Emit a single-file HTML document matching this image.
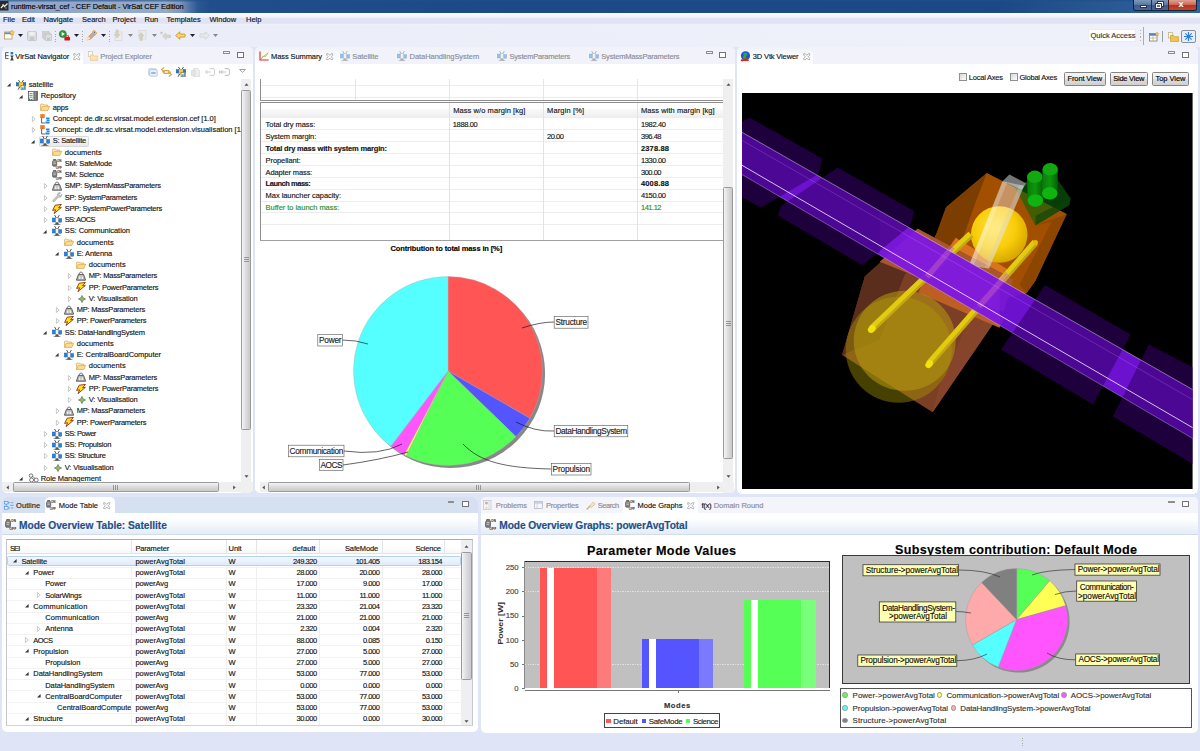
<!DOCTYPE html>
<html><head><meta charset="utf-8"><title>VirSat CEF Edition</title>
<style>
*{box-sizing:border-box;margin:0;padding:0}
html,body{width:1200px;height:751px;overflow:hidden}
body{position:relative;background:#dfe5f6;font-family:"Liberation Sans",sans-serif;font-size:7.5px;color:#141414;line-height:9px;-webkit-text-stroke:.14px currentColor}
.t{position:absolute;white-space:pre;line-height:9px}
.b{font-weight:700;font-size:7.2px}
.panel{position:absolute;background:#fff;border-radius:5px;overflow:hidden}
.tabbar{position:absolute;left:0;top:0;right:0;height:17px;background:#f2f3fa}
.tab-act{position:absolute;top:0;height:17px;background:linear-gradient(#eef2f8,#fff 80%);border-radius:5px 5px 0 0}
.dim{color:#8b8b96}
svg{position:absolute;overflow:visible}
.ic{width:10px;height:10px}
#title{position:absolute;left:0;top:0;width:1200px;height:12.500px;background:linear-gradient(rgba(31,78,138,.75) 0,rgba(31,78,138,0) 2.500px),linear-gradient(90deg,#8fa6c8 0,#95abcb 165px,#7d97bf 180px,#4c72a6 190px,#2a5893 198px,#1f4e8a 210px,#1c4a86 500px,#1b4985 1000px,#2a5a94 1120px,#33649c 1200px)}
#menubar{position:absolute;left:0;top:12.500px;width:1200px;height:12.500px;background:linear-gradient(#fbfcfe 0,#f1f3fa 35%,#dfe3f3 45%,#dfe3f3 85%,#f4f6fb 100%)}
#toolbar{position:absolute;left:0;top:25px;width:1200px;height:22px;background:linear-gradient(90deg,#eaedf8,#eff1fa)}
.vsb{position:absolute;width:10px;background:#efefef}
.vsb .th,.hsb .th{position:absolute;border:1px solid #9a9a9a;border-radius:1.500px}
.vsb .th{left:0;width:10px;background:linear-gradient(90deg,#f4f4f4,#dcdcdc 50%,#c9c9c9)}
.hsb{position:absolute;height:10px;background:#efefef}
.hsb .th{top:0;height:10px;background:linear-gradient(#f4f4f4,#dcdcdc 50%,#c9c9c9)}
.arr{position:absolute;width:0;height:0}
.mm{position:absolute;top:4px;width:6.500px;height:2.500px;border:1px solid #8c8c8c;background:#f4f4f4;border-radius:.500px}
.mx{position:absolute;top:4.500px;width:7px;height:6.500px;border:1px solid #747474;border-top-width:1.600px;background:#fff}
.g{position:absolute;background:#e9e9ee}
.num{text-align:right}
</style></head><body>
<svg width="0" height="0" style="position:absolute"><defs>
<symbol id="i-sat" viewBox="0 0 10 10"><path d="M2.600 0L4.400 3M7.400 0L5.600 3" stroke="#111" stroke-width=".7"/><rect x="3.400" y="2.800" width="3.200" height="4.600" fill="#f2f2f2" stroke="#666" stroke-width=".4"/><rect x=".3" y="3" width="2.800" height="4" fill="#1e88e5" stroke="#0d4fa0" stroke-width=".4"/><rect x="6.900" y="3.600" width="2.800" height="3.600" fill="#1e88e5" stroke="#0d4fa0" stroke-width=".4"/><path d="M2.800 9.600L4 7.600h2L7.200 9.600z" fill="#555"/><path d="M1.600 9.700h6.800" stroke="#333" stroke-width=".6"/></symbol>
<symbol id="i-proj" viewBox="0 0 10 10"><path d="M2.400 0L4.400 2.600M7.600 0L5.600 2.600" stroke="#111" stroke-width=".7"/><rect x="2.600" y="2.400" width="4.800" height="4.600" fill="#f5d020" stroke="#b8960a" stroke-width=".4"/><rect x=".2" y="2.600" width="2.400" height="3.400" fill="#1e78d8" stroke="#0d4fa0" stroke-width=".4"/><rect x="7.400" y="2.600" width="2.400" height="3.400" fill="#1e78d8" stroke="#0d4fa0" stroke-width=".4"/><path d="M2 9.800L3.600 7M8 9.800L6.400 7" stroke="#111" stroke-width=".7"/><rect x="5" y="5.400" width="4.600" height="4.400" fill="#f4f4f4" stroke="#555" stroke-width=".5"/><rect x="5.600" y="7.400" width="2" height="2.200" fill="#29a3e8"/><rect x="7.800" y="6" width="1.200" height="3.600" fill="#8a8a8a"/></symbol>
<symbol id="i-repo" viewBox="0 0 10 10"><rect x=".5" y=".6" width="9" height="8.800" fill="#fbfbfb" stroke="#3a3a3a" stroke-width=".7"/><rect x="5.400" y="1" width="3.700" height="8" fill="#6e6e6e"/><path d="M7.200 1v8" stroke="#a8a8a8" stroke-width=".7"/><path d="M1.400 2.600h3.200M1.400 4.400h3.200M1.400 6.200h3.200" stroke="#2a9a3a" stroke-width=".8"/><path d="M1 9.200v-2l1.700 1.500 1.700-1.500v2z" fill="#1565e0"/></symbol>
<symbol id="i-folder" viewBox="0 0 10 10"><path d="M.6 8.400V2.600a.5.500 0 0 1 .5-.5h2.300l.8.900h3.400v1.300" fill="#fdf3d6" stroke="#d9a03c" stroke-width=".7"/><path d="M.6 8.400L2.300 4.300h7.300L7.900 8.400z" fill="#fbdc94" stroke="#d9a03c" stroke-width=".7" stroke-linejoin="round"/></symbol>
<symbol id="i-concept" viewBox="0 0 10 10"><path d="M1.600 4v5h3.600" fill="none" stroke="#222" stroke-width=".7"/><rect x=".4" y=".2" width="4.200" height="3.800" rx=".4" fill="#f57c1f" stroke="#c85a0a" stroke-width=".3"/><rect x="6" y="3.400" width="3.600" height="1.800" rx=".3" fill="#1e88e5"/><rect x="6.600" y="5.600" width="3" height="1.400" rx=".3" fill="#1e88e5"/><rect x="5.400" y="7.600" width="4.200" height="1.800" rx=".3" fill="#1e88e5"/></symbol>
<symbol id="i-mode" viewBox="0 0 10 10"><path d="M1.200 1.400a1.500 1.500 0 0 1 3 0l.6 1.200v3.600l-.8 1H1l-.6-1V2.800z" fill="#7d7d7d" stroke="#3c3c3c" stroke-width=".5"/><path d="M1.400 3h2.400M1.400 4.600h2.400" stroke="#d8d8d8" stroke-width=".7"/><text x="5" y="2.900" font-family="Liberation Sans, sans-serif" font-size="3" font-weight="700" fill="#222">ON</text><text x="3.800" y="9.900" font-family="Liberation Sans, sans-serif" font-size="3" font-weight="700" fill="#222">OFF</text></symbol>
<symbol id="i-mass" viewBox="0 0 10 10"><path d="M3.600 3.400a1.600 1.600 0 1 1 2.800 0" fill="none" stroke="#4a4a4a" stroke-width=".8"/><path d="M2.400 3.400h5.200L9.600 9.200H.4z" fill="#b9b9b9" stroke="#3e3e3e" stroke-width=".8" stroke-linejoin="round"/><path d="M3 5.600h1.400v2.400H3zM5.600 5.600H7v2.400H5.600z" fill="#f0f0f0"/></symbol>
<symbol id="i-wrench" viewBox="0 0 10 10"><path d="M.8 8.400L5.400 3.800a2.400 2.400 0 0 1 3.200-3L7 2.400l.6 1 1.200.2 1-1.400a2.400 2.400 0 0 1-3.200 2.800L2.200 9.600a1 1 0 0 1-1.400-1.200z" fill="#c9c9c9" stroke="#8a8a8a" stroke-width=".5"/></symbol>
<symbol id="i-power" viewBox="0 0 10 10"><path d="M3.200 1.200L9.400.4 6.600 3.800l2.800-.4L2 9.600l1.600-3.800-3 .6z" fill="#f9e21c" stroke="#9c2a12" stroke-width=".9" stroke-linejoin="round"/></symbol>
<symbol id="i-vis" viewBox="0 0 10 10"><path d="M5 1.400L6.200 3.800 8.600 5 6.200 6.200 5 8.600 3.800 6.200 1.400 5 3.800 3.800z" fill="#8fbf5a" stroke="#5a5a5a" stroke-width=".6" stroke-linejoin="round"/></symbol>
<symbol id="i-role" viewBox="0 0 11 10"><circle cx="3" cy="2.600" r="1.800" fill="#fff" stroke="#444" stroke-width=".7"/><circle cx="3.600" cy="7" r="2" fill="#fff" stroke="#444" stroke-width=".7"/><circle cx="8.200" cy="7" r="2" fill="#fff" stroke="#444" stroke-width=".7"/><path d="M4.600 3.400L7 5.400" stroke="#444" stroke-width=".6"/></symbol>
<symbol id="i-close" viewBox="0 0 8 8"><path d="M.8.800h1.600L4 2.600 5.600.8h1.600v1.400L5.600 4l1.600 1.800v1.400H5.600L4 5.400 2.400 7.200H.8V5.800L2.400 4 .8 2.200z" fill="#fff" stroke="#777" stroke-width=".6"/></symbol>
<symbol id="i-sated" viewBox="0 0 10 10"><path d="M2.600 0L4.400 3M7.400 0L5.600 3" stroke="#999" stroke-width=".7"/><rect x="3.400" y="2.800" width="3.200" height="4.600" fill="#f2f2f2" stroke="#aaa" stroke-width=".4"/><rect x=".3" y="3" width="2.800" height="4" fill="#8dbfee" stroke="#7fa2cc" stroke-width=".4"/><rect x="6.900" y="3.600" width="2.800" height="3.600" fill="#8dbfee" stroke="#7fa2cc" stroke-width=".4"/><path d="M2.800 9.600L4 7.600h2L7.200 9.600z" fill="#aaa"/><path d="M1.600 9.700h6.800" stroke="#999" stroke-width=".6"/></symbol>
</defs></svg>
<!--TITLE-->
<div id="title">
 
 <svg style="left:0;top:1px" width="9" height="10" viewBox="0 0 9 10"><rect x="0" y="0" width="8.5" height="9.5" fill="#2a2a2a"/><path d="M1 7 L3.5 4 L4.5 5.5 L7.5 2.5" stroke="#e8e8e8" stroke-width="1.3" fill="none"/><path d="M2 3.5h2M5 7h2" stroke="#aaa" stroke-width=".8"/></svg>
 <div class="t" style="left:11px;top:1.5px;font-size:7.45px;color:#000;letter-spacing:-.04px">runtime-virsat_cef - CEF Default - VirSat CEF Edition</div>
 <div style="position:absolute;left:1133px;top:0;width:64px;height:10.5px;border:1px solid #14243c;border-top:0;border-radius:0 0 3px 3px;background:linear-gradient(#7f98b8,#5b7aa3 45%,#3a5c8c 50%,#47699a);overflow:hidden">
  <div style="position:absolute;left:17px;top:0;width:1px;height:10px;background:#1b2f4e"></div>
  <div style="position:absolute;left:34px;top:0;width:29px;height:10px;background:linear-gradient(#e0a194,#cf6a57 45%,#b9321b 50%,#c8452c);border-left:1px solid #4a1a12"></div>
  <div style="position:absolute;left:6px;top:5px;width:6.5px;height:2.5px;background:#fff;border:.5px solid #334"></div>
  <div style="position:absolute;left:23.5px;top:1.5px;width:5px;height:4px;border:1px solid #fff;border-top-width:1.5px;outline:.5px solid #334"></div>
  <div style="position:absolute;left:21.5px;top:3.5px;width:5px;height:4px;border:1px solid #fff;border-top-width:1.5px;background:#5876a2;outline:.5px solid #334"></div>
  <div class="t" style="left:44.5px;top:-.5px;font-size:9px;font-weight:700;color:#fff;text-shadow:0 0 1px #422">x</div>
 </div>
</div>
<div id="menubar">
 <div class="t" style="left:3px;top:2.5px;word-spacing:0">File</div><div class="t" style="left:22px;top:2.5px">Edit</div><div class="t" style="left:43.5px;top:2.5px">Navigate</div><div class="t" style="left:82px;top:2.5px">Search</div><div class="t" style="left:112.5px;top:2.5px">Project</div><div class="t" style="left:144.5px;top:2.5px">Run</div><div class="t" style="left:166.5px;top:2.5px">Templates</div><div class="t" style="left:209.5px;top:2.5px">Window</div><div class="t" style="left:246px;top:2.5px">Help</div>
</div>
<div id="toolbar">

<svg style="left:4px;top:5px" width="10" height="10" viewBox="0 0 10 10"><rect x=".5" y="2" width="7.5" height="7" fill="#fdfdfd" stroke="#b79a4a" stroke-width=".8"/><rect x=".9" y="2.4" width="6.7" height="1.8" fill="#5a8fd8"/><path d="M8 0l.8 1.6 1.6.4-1.2 1.2.3 1.8L8 4.2 6.5 5l.3-1.8L5.6 2l1.6-.4z" fill="#f7d55a" stroke="#b8860b" stroke-width=".4"/></svg>
<svg style="left:18px;top:9.2px" width="5" height="3"><path d="M0 0h5L2.5 3z" fill="#222"/></svg>
<svg style="left:27px;top:6px" width="10" height="10" viewBox="0 0 10 10"><rect x=".5" y=".5" width="9" height="9" rx="1" fill="#dcdcdc" stroke="#c0c0c0" stroke-width=".8"/><rect x="2.3" y=".8" width="5.4" height="3.6" fill="#efefef"/><rect x="3" y="6" width="4" height="3.4" fill="#c8c8c8"/></svg>
<svg style="left:42px;top:6px" width="10" height="10" viewBox="0 0 10 10"><rect x=".5" y=".5" width="6.5" height="6.5" fill="#d6d6d6" stroke="#c4c4c4" stroke-width=".6"/><rect x="2" y="2" width="6.5" height="6.5" fill="#d9d9d9" stroke="#c0c0c0" stroke-width=".6"/><rect x="3.2" y="3.2" width="6.3" height="6.3" fill="#dedede" stroke="#bcbcbc" stroke-width=".6"/><rect x="5" y="6.8" width="3" height="2.6" fill="#c6c6c6"/></svg>
<div style="position:absolute;left:54.5px;top:6px;width:1px;height:11px;background:repeating-linear-gradient(#a9a89a 0,#a9a89a 1.2px,transparent 1.2px,transparent 2.5px)"></div>
<svg style="left:59px;top:5px" width="12" height="11" viewBox="0 0 12 11"><circle cx="3.8" cy="4" r="3.6" fill="#2e9a3c" stroke="#1d6d28" stroke-width=".5"/><path d="M2.7 2v4l3.2-2z" fill="#fff"/><rect x="5.4" y="7" width="5.6" height="3.4" rx=".4" fill="#d8141c"/><rect x="7" y="5.8" width="2.4" height="1.6" fill="none" stroke="#d8141c" stroke-width=".8"/></svg>
<svg style="left:73.5px;top:9.2px" width="5" height="3"><path d="M0 0h5L2.5 3z" fill="#222"/></svg><div style="position:absolute;left:81.5px;top:6px;width:1px;height:11px;background:repeating-linear-gradient(#a9a89a 0,#a9a89a 1.2px,transparent 1.2px,transparent 2.5px)"></div>
<svg style="left:86px;top:5px" width="12" height="11" viewBox="0 0 12 11"><path d="M1 10l1.5-3.5 5.5-5.5 2.5 2.5-5.5 5.5z" fill="#f0b34a" stroke="#c98a22" stroke-width=".5"/><path d="M3 6.2l4-4 2.2 2.2-4 4z" fill="#b9a8b8"/><path d="M6.2 1.8L8 0l3 2.8-1.8 1.9z" fill="#f5c55e" stroke="#c98a22" stroke-width=".4"/><path d="M0 10.8l2.3-4.3 2 2z" fill="#fbe7b9"/><circle cx="8.6" cy="2.2" r=".7" fill="#4169b0"/></svg>
<svg style="left:100.5px;top:9.2px" width="5" height="3"><path d="M0 0h5L2.5 3z" fill="#222"/></svg><div style="position:absolute;left:108.5px;top:6px;width:1px;height:11px;background:repeating-linear-gradient(#a9a89a 0,#a9a89a 1.2px,transparent 1.2px,transparent 2.5px)"></div>
<svg style="left:113px;top:5px" width="10" height="11" viewBox="0 0 10 11"><rect x="2" y="2" width="7" height="8.5" fill="#ececec" stroke="#d2d2d2" stroke-width=".6"/><path d="M3.2 0h2v4.5h1.6L4.2 8 1.6 4.500h1.600z" fill="#d4d2c4" stroke="#bdb9a4" stroke-width=".4"/></svg>
<svg style="left:128px;top:9.2px" width="5" height="3"><path d="M0 0h5L2.5 3z" fill="#888"/></svg>
<svg style="left:137px;top:5px" width="10" height="11" viewBox="0 0 10 11"><rect x="2" y=".5" width="7" height="8.5" fill="#ececec" stroke="#d2d2d2" stroke-width=".6"/><path d="M3.2 10.500h2V6h1.600L4.200 2.500 1.600 6h1.600z" fill="#d4d2c4" stroke="#bdb9a4" stroke-width=".4"/></svg>
<svg style="left:151.5px;top:9.2px" width="5" height="3"><path d="M0 0h5L2.5 3z" fill="#888"/></svg>
<svg style="left:160px;top:6px" width="11" height="9" viewBox="0 0 11 9"><path d="M2.500 5L6 2v2h4.500v2.500H6v2z" fill="#d6d6cc" stroke="#c2c2b6" stroke-width=".5"/><path d="M1.500 0l.5 1.200 1.300.2-1 .8.300 1.300-1.100-.7-1.100.7.300-1.300-1-.8 1.300-.2z" fill="#c4c4c4"/></svg>
<svg style="left:175px;top:6px" width="11" height="9" viewBox="0 0 11 9"><path d="M.6 4.500L4.800.8v2.200h4.600a.8.800 0 0 1 .8.800v1.500a.8.800 0 0 1-.8.800H4.800v2.200z" fill="#fbd46a" stroke="#c8901e" stroke-width=".8"/></svg>
<svg style="left:189.5px;top:9.2px" width="5" height="3"><path d="M0 0h5L2.5 3z" fill="#222"/></svg>
<svg style="left:199px;top:6px" width="11" height="9" viewBox="0 0 11 9"><path d="M10.400 4.500L6.200.8v2.200H1.600a.8.800 0 0 0-.8.800v1.500a.8.800 0 0 0 .8.800h4.600v2.200z" fill="#e9e9e9" stroke="#cfcfcf" stroke-width=".8"/></svg>
<svg style="left:213px;top:9.2px" width="5" height="3"><path d="M0 0h5L2.5 3z" fill="#888"/></svg>
<div style="position:absolute;left:1088px;top:4px;width:48px;height:13px;background:#fff;border:1px solid #e9ecf6"></div>
<div class="t" style="left:1090.500px;top:6px;color:#333">Quick Access</div>
<div style="position:absolute;left:1139.500px;top:5px;width:1px;height:13px;background:repeating-linear-gradient(#b5b4a6 0,#b5b4a6 1.200px,transparent 1.200px,transparent 3.200px)"></div>
<div style="position:absolute;left:1142.800px;top:2px;width:1px;height:18px;background:#a8abb8"></div>
<svg style="left:1149px;top:7px" width="10" height="10" viewBox="0 0 10 10"><rect x=".5" y="1.500" width="7.500" height="7.500" fill="#fff" stroke="#6a7a94" stroke-width=".8"/><rect x=".9" y="1.900" width="6.700" height="1.800" fill="#4f7fc4"/><path d="M.5 6h7.500M4 3.700v5.300" stroke="#c9b26a" stroke-width=".8"/><path d="M8 0l.7 1.300 1.300.3-1 1 .2 1.400L8 3.400l-1.200.6.200-1.400-1-1 1.300-.3z" fill="#f7d55a" stroke="#b8860b" stroke-width=".4"/></svg>
<div style="position:absolute;left:1162px;top:6px;width:1px;height:11px;background:#9a9ca6"></div>
<svg style="left:1167.500px;top:7px" width="11" height="10" viewBox="0 0 11 10"><rect x=".5" y=".5" width="4" height="5.500" fill="#f4f4f4" stroke="#b9a46a" stroke-width=".6"/><path d="M2.500 3.500h3l1 1.200h4v4.800h-8z" fill="#f6c445" stroke="#c3922a" stroke-width=".6"/></svg>
<div style="position:absolute;left:1181px;top:5px;width:14.500px;height:13px;border:1px solid #8a8f9c;border-radius:2px;background:#e8edf7"></div>
<svg style="left:1184px;top:7px" width="9" height="9" viewBox="0 0 9 9"><g stroke="#2f7fd6" stroke-width="1.100"><path d="M4.500 0v9M0 4.500h9M1.300 1.300l6.400 6.400M7.700 1.300L1.300 7.700"/></g><circle cx="4.500" cy="4.500" r="1.800" fill="#2f7fd6"/></svg>

</div>
<div class="panel" id="pNav" style="left:2px;top:47px;width:251px;height:446px">
<div class="tabbar"></div>
<div class="tab-act" style="left:0;width:81px"></div>
<svg style="left:3px;top:5px" width="10" height="9" viewBox="0 0 10 9"><path d="M.6.600h3M.6 3.600h3M.6 6.600h3M.6.600v6" stroke="#333" stroke-width=".8" fill="none"/><rect x="5.600" y="0" width="2.600" height="2.400" fill="#1e78d8"/><path d="M5.200 3.400h3.600L7.600 5.400 8.800 8.400H5.200l1.200-3z" fill="#444"/></svg>
<div class="t" style="left:13.30px;top:5.00px;letter-spacing:-0.030px;">VirSat Navigator</div>
<svg style="left:71px;top:6px" width="7.500" height="7.500"><use href="#i-close"/></svg>
<svg style="left:86px;top:4px" width="10" height="10" viewBox="0 0 10 10"><rect x=".5" y=".5" width="4" height="5" fill="#fafafa" stroke="#cdbf95" stroke-width=".6"/><path d="M2.400 4h2.600l.8 1h3.600v4.400h-7z" fill="#fbe6b1" stroke="#dcc088" stroke-width=".6"/></svg>
<div class="t dim" style="left:98.30px;top:5.00px;letter-spacing:-0.116px;">Project Explorer</div>
<div class="mm" style="left:221px"></div><div class="mx" style="left:235px"></div>
<svg style="left:146px;top:21px" width="10" height="9" viewBox="0 0 10 9"><rect x=".4" y=".4" width="7.600" height="6.600" rx="1" fill="#dfe9f6" stroke="#b4c8e4" stroke-width=".6"/><rect x="1.600" y="1.600" width="7.600" height="6.600" rx="1" fill="#eaf1fb" stroke="#9db7dc" stroke-width=".7"/><path d="M3.200 5h4.400" stroke="#4f7fbf" stroke-width="1"/></svg>
<svg style="left:159px;top:20px" width="11" height="10" viewBox="0 0 11 10"><path d="M3.200.4L.6 2.600l2.600 2.200V3.600h4.400l2 2.200" fill="none" stroke="#d9a441" stroke-width="1.200"/><path d="M7.800 9.600l2.600-2.200-2.600-2.200v1.200H3.400L1.400 4.200" fill="none" stroke="#d9a441" stroke-width="1.200"/></svg>
<svg class="ic" style="left:174px;top:20px"><use href="#i-proj"/></svg>
<svg style="left:189px;top:21px" width="9" height="9" viewBox="0 0 9 9"><path d="M2.600.5h4l2 2v6h-6z" fill="#ededed" stroke="#d4d4d4" stroke-width=".6"/><path d="M.5 2.500h3.500v5H.5z" fill="#e4e4e4" stroke="#d0d0d0" stroke-width=".5"/></svg>
<svg style="left:203px;top:21px" width="10" height="8" viewBox="0 0 10 8"><path d="M4.600.6h3.400a1.400 1.400 0 0 1 1.400 1.400v4a1.400 1.400 0 0 1-1.400 1.400H4.600M.4 4h5.600M2.400 2.200L.6 4l1.800 1.800" fill="none" stroke="#c6c6c6" stroke-width=".9"/></svg>
<svg style="left:217px;top:21px" width="11" height="8" viewBox="0 0 11 8"><path d="M5.600.6h3.400a1.400 1.400 0 0 1 1.400 1.400v4a1.400 1.400 0 0 1-1.400 1.400H5.600M1.400 4h5.600M3.400 2.200L1.600 4l1.800 1.800M.6 2.600v2.800" fill="none" stroke="#b9b9b9" stroke-width=".9"/></svg>
<svg style="left:237px;top:22px" width="7" height="4" viewBox="0 0 7 4"><path d="M.6.500h5.800L3.500 3.400z" fill="#fff" stroke="#777" stroke-width=".7"/></svg>
<div style="position:absolute;left:0;top:29px;width:239px;height:406px;overflow:hidden">
<svg style="left:5.3px;top:7.30px" width="4" height="4"><path d="M3.600 0V3.600H0z" fill="#333"/></svg>
<svg class="ic" style="left:14.0px;top:3.80px"><use href="#i-proj"/></svg>
<div class="t" style="left:26.70px;top:4.10px;letter-spacing:-0.081px;">satellite</div>
<svg style="left:17.3px;top:18.55px" width="4" height="4"><path d="M3.600 0V3.600H0z" fill="#333"/></svg>
<svg class="ic" style="left:26.0px;top:15.05px"><use href="#i-repo"/></svg>
<div class="t" style="left:38.70px;top:15.35px;letter-spacing:-0.055px;">Repository</div>
<svg class="ic" style="left:38.0px;top:26.30px"><use href="#i-folder"/></svg>
<div class="t" style="left:50.70px;top:26.60px;letter-spacing:-0.166px;">apps</div>
<svg style="left:29.5px;top:39.85px" width="4" height="6"><path d="M.4.500L3.200 3 .4 5.500z" fill="#fff" stroke="#a6a6a6" stroke-width=".6"/></svg>
<svg class="ic" style="left:38.0px;top:37.55px"><use href="#i-concept"/></svg>
<div class="t" style="left:50.70px;top:37.85px;letter-spacing:-0.049px;">Concept: de.dlr.sc.virsat.model.extension.cef [1.0]</div>
<svg style="left:29.5px;top:51.10px" width="4" height="6"><path d="M.4.500L3.200 3 .4 5.500z" fill="#fff" stroke="#a6a6a6" stroke-width=".6"/></svg>
<svg class="ic" style="left:38.0px;top:48.80px"><use href="#i-concept"/></svg>
<div class="t" style="left:50.70px;top:49.10px;letter-spacing:0.002px;">Concept: de.dlr.sc.virsat.model.extension.visualisation [1.0]</div>
<div style="position:absolute;left:36.5px;top:59.75px;width:50px;height:11.200px;border:1px solid #d9d9d9;border-radius:1.500px;background:linear-gradient(#fafafa,#e9e9e9)"></div>
<svg style="left:29.3px;top:63.55px" width="4" height="4"><path d="M3.600 0V3.600H0z" fill="#333"/></svg>
<svg class="ic" style="left:38.0px;top:60.05px"><use href="#i-sat"/></svg>
<div class="t" style="left:50.70px;top:60.35px;letter-spacing:-0.213px;">S: Satellite</div>
<svg class="ic" style="left:50.0px;top:71.30px"><use href="#i-folder"/></svg>
<div class="t" style="left:62.70px;top:71.60px;letter-spacing:0.035px;">documents</div>
<svg style="left:49.5px;top:82.85px" width="10" height="10"><use href="#i-mode"/></svg>
<div class="t" style="left:62.70px;top:82.85px;letter-spacing:-0.192px;">SM: SafeMode</div>
<svg style="left:49.5px;top:94.10px" width="10" height="10"><use href="#i-mode"/></svg>
<div class="t" style="left:62.70px;top:94.10px;letter-spacing:-0.255px;">SM: Science</div>
<svg style="left:41.5px;top:107.35px" width="4" height="6"><path d="M.4.500L3.200 3 .4 5.500z" fill="#fff" stroke="#a6a6a6" stroke-width=".6"/></svg>
<svg class="ic" style="left:50.0px;top:105.05px"><use href="#i-mass"/></svg>
<div class="t" style="left:62.70px;top:105.35px;letter-spacing:-0.244px;">SMP: SystemMassParameters</div>
<svg style="left:41.5px;top:118.60px" width="4" height="6"><path d="M.4.500L3.200 3 .4 5.500z" fill="#fff" stroke="#a6a6a6" stroke-width=".6"/></svg>
<svg class="ic" style="left:50.0px;top:116.30px"><use href="#i-wrench"/></svg>
<div class="t" style="left:62.70px;top:116.60px;letter-spacing:-0.282px;">SP: SystemParameters</div>
<svg style="left:41.5px;top:129.85px" width="4" height="6"><path d="M.4.500L3.200 3 .4 5.500z" fill="#fff" stroke="#a6a6a6" stroke-width=".6"/></svg>
<svg class="ic" style="left:50.0px;top:127.55px"><use href="#i-power"/></svg>
<div class="t" style="left:62.70px;top:127.85px;letter-spacing:-0.266px;">SPP: SystemPowerParameters</div>
<svg style="left:41.5px;top:141.10px" width="4" height="6"><path d="M.4.500L3.200 3 .4 5.500z" fill="#fff" stroke="#a6a6a6" stroke-width=".6"/></svg>
<svg class="ic" style="left:50.0px;top:138.80px"><use href="#i-sat"/></svg>
<div class="t" style="left:62.70px;top:139.10px;letter-spacing:-0.589px;">SS: AOCS</div>
<svg style="left:41.3px;top:153.55px" width="4" height="4"><path d="M3.600 0V3.600H0z" fill="#333"/></svg>
<svg class="ic" style="left:50.0px;top:150.05px"><use href="#i-sat"/></svg>
<div class="t" style="left:62.70px;top:150.35px;letter-spacing:-0.058px;">SS: Communication</div>
<svg class="ic" style="left:62.0px;top:161.30px"><use href="#i-folder"/></svg>
<div class="t" style="left:74.70px;top:161.60px;letter-spacing:0.035px;">documents</div>
<svg style="left:53.3px;top:176.05px" width="4" height="4"><path d="M3.600 0V3.600H0z" fill="#333"/></svg>
<svg class="ic" style="left:62.0px;top:172.55px"><use href="#i-sat"/></svg>
<div class="t" style="left:74.70px;top:172.85px;letter-spacing:-0.140px;">E: Antenna</div>
<svg class="ic" style="left:74.0px;top:183.80px"><use href="#i-folder"/></svg>
<div class="t" style="left:86.70px;top:184.10px;letter-spacing:0.035px;">documents</div>
<svg style="left:65.5px;top:197.35px" width="4" height="6"><path d="M.4.500L3.200 3 .4 5.500z" fill="#fff" stroke="#a6a6a6" stroke-width=".6"/></svg>
<svg class="ic" style="left:74.0px;top:195.05px"><use href="#i-mass"/></svg>
<div class="t" style="left:86.70px;top:195.35px;letter-spacing:-0.211px;">MP: MassParameters</div>
<svg style="left:65.5px;top:208.60px" width="4" height="6"><path d="M.4.500L3.200 3 .4 5.500z" fill="#fff" stroke="#a6a6a6" stroke-width=".6"/></svg>
<svg class="ic" style="left:74.0px;top:206.30px"><use href="#i-power"/></svg>
<div class="t" style="left:86.70px;top:206.60px;letter-spacing:-0.242px;">PP: PowerParameters</div>
<svg style="left:65.5px;top:219.85px" width="4" height="6"><path d="M.4.500L3.200 3 .4 5.500z" fill="#fff" stroke="#a6a6a6" stroke-width=".6"/></svg>
<svg class="ic" style="left:75.0px;top:218.05px"><use href="#i-vis"/></svg>
<div class="t" style="left:86.70px;top:217.85px;letter-spacing:-0.123px;">V: Visualisation</div>
<svg style="left:53.5px;top:231.10px" width="4" height="6"><path d="M.4.500L3.200 3 .4 5.500z" fill="#fff" stroke="#a6a6a6" stroke-width=".6"/></svg>
<svg class="ic" style="left:62.0px;top:228.80px"><use href="#i-mass"/></svg>
<div class="t" style="left:74.70px;top:229.10px;letter-spacing:-0.211px;">MP: MassParameters</div>
<svg style="left:53.5px;top:242.35px" width="4" height="6"><path d="M.4.500L3.200 3 .4 5.500z" fill="#fff" stroke="#a6a6a6" stroke-width=".6"/></svg>
<svg class="ic" style="left:62.0px;top:240.05px"><use href="#i-power"/></svg>
<div class="t" style="left:74.70px;top:240.35px;letter-spacing:-0.242px;">PP: PowerParameters</div>
<svg style="left:41.3px;top:254.80px" width="4" height="4"><path d="M3.600 0V3.600H0z" fill="#333"/></svg>
<svg class="ic" style="left:50.0px;top:251.30px"><use href="#i-sat"/></svg>
<div class="t" style="left:62.70px;top:251.60px;letter-spacing:-0.210px;">SS: DataHandlingSystem</div>
<svg class="ic" style="left:62.0px;top:262.55px"><use href="#i-folder"/></svg>
<div class="t" style="left:74.70px;top:262.85px;letter-spacing:0.035px;">documents</div>
<svg style="left:53.3px;top:277.30px" width="4" height="4"><path d="M3.600 0V3.600H0z" fill="#333"/></svg>
<svg class="ic" style="left:62.0px;top:273.80px"><use href="#i-sat"/></svg>
<div class="t" style="left:74.70px;top:274.10px;letter-spacing:-0.091px;">E: CentralBoardComputer</div>
<svg class="ic" style="left:74.0px;top:285.05px"><use href="#i-folder"/></svg>
<div class="t" style="left:86.70px;top:285.35px;letter-spacing:0.035px;">documents</div>
<svg style="left:65.5px;top:298.60px" width="4" height="6"><path d="M.4.500L3.200 3 .4 5.500z" fill="#fff" stroke="#a6a6a6" stroke-width=".6"/></svg>
<svg class="ic" style="left:74.0px;top:296.30px"><use href="#i-mass"/></svg>
<div class="t" style="left:86.70px;top:296.60px;letter-spacing:-0.211px;">MP: MassParameters</div>
<svg style="left:65.5px;top:309.85px" width="4" height="6"><path d="M.4.500L3.200 3 .4 5.500z" fill="#fff" stroke="#a6a6a6" stroke-width=".6"/></svg>
<svg class="ic" style="left:74.0px;top:307.55px"><use href="#i-power"/></svg>
<div class="t" style="left:86.70px;top:307.85px;letter-spacing:-0.242px;">PP: PowerParameters</div>
<svg style="left:65.5px;top:321.10px" width="4" height="6"><path d="M.4.500L3.200 3 .4 5.500z" fill="#fff" stroke="#a6a6a6" stroke-width=".6"/></svg>
<svg class="ic" style="left:75.0px;top:319.30px"><use href="#i-vis"/></svg>
<div class="t" style="left:86.70px;top:319.10px;letter-spacing:-0.123px;">V: Visualisation</div>
<svg style="left:53.5px;top:332.35px" width="4" height="6"><path d="M.4.500L3.200 3 .4 5.500z" fill="#fff" stroke="#a6a6a6" stroke-width=".6"/></svg>
<svg class="ic" style="left:62.0px;top:330.05px"><use href="#i-mass"/></svg>
<div class="t" style="left:74.70px;top:330.35px;letter-spacing:-0.211px;">MP: MassParameters</div>
<svg style="left:53.5px;top:343.60px" width="4" height="6"><path d="M.4.500L3.200 3 .4 5.500z" fill="#fff" stroke="#a6a6a6" stroke-width=".6"/></svg>
<svg class="ic" style="left:62.0px;top:341.30px"><use href="#i-power"/></svg>
<div class="t" style="left:74.70px;top:341.60px;letter-spacing:-0.242px;">PP: PowerParameters</div>
<svg style="left:41.5px;top:354.85px" width="4" height="6"><path d="M.4.500L3.200 3 .4 5.500z" fill="#fff" stroke="#a6a6a6" stroke-width=".6"/></svg>
<svg class="ic" style="left:50.0px;top:352.55px"><use href="#i-sat"/></svg>
<div class="t" style="left:62.70px;top:352.85px;letter-spacing:-0.470px;">SS: Power</div>
<svg style="left:41.5px;top:366.10px" width="4" height="6"><path d="M.4.500L3.200 3 .4 5.500z" fill="#fff" stroke="#a6a6a6" stroke-width=".6"/></svg>
<svg class="ic" style="left:50.0px;top:363.80px"><use href="#i-sat"/></svg>
<div class="t" style="left:62.70px;top:364.10px;letter-spacing:-0.229px;">SS: Propulsion</div>
<svg style="left:41.5px;top:377.35px" width="4" height="6"><path d="M.4.500L3.200 3 .4 5.500z" fill="#fff" stroke="#a6a6a6" stroke-width=".6"/></svg>
<svg class="ic" style="left:50.0px;top:375.05px"><use href="#i-sat"/></svg>
<div class="t" style="left:62.70px;top:375.35px;letter-spacing:-0.285px;">SS: Structure</div>
<svg style="left:41.5px;top:388.60px" width="4" height="6"><path d="M.4.500L3.200 3 .4 5.500z" fill="#fff" stroke="#a6a6a6" stroke-width=".6"/></svg>
<svg class="ic" style="left:51.0px;top:386.80px"><use href="#i-vis"/></svg>
<div class="t" style="left:62.70px;top:386.60px;letter-spacing:-0.123px;">V: Visualisation</div>
<svg style="left:17.3px;top:401.05px" width="4" height="4"><path d="M3.600 0V3.600H0z" fill="#333"/></svg>
<svg style="left:26.0px;top:396.85px" width="11" height="10"><use href="#i-role"/></svg>
<div class="t" style="left:38.70px;top:397.85px;letter-spacing:-0.072px;">Role Management</div>
</div>
<div class="vsb" style="left:239px;top:32px;height:403px"><svg style="left:2.500px;top:3.500px" width="5" height="3"><path d="M.5 2.800L2.500 .3 4.500 2.800z" fill="#505050"/></svg><div class="th" style="top:11px;height:340px"></div><svg style="left:2.500px;top:178px" width="5" height="5"><path d="M0 .5h5M0 2.500h5M0 4.500h5" stroke="#666" stroke-width=".6"/></svg><svg style="left:2.500px;top:396px" width="5" height="3"><path d="M.5 .2L2.500 2.700 4.500 .2z" fill="#505050"/></svg></div>
<div class="hsb" style="left:0;top:435px;width:239px"><svg style="left:3.500px;top:2.500px" width="3" height="5"><path d="M2.800 .5L.3 2.500 2.800 4.500z" fill="#505050"/></svg><div class="th" style="left:11px;width:206px"></div><svg style="left:111px;top:2.500px" width="5" height="5"><path d="M.5 0v5M2.500 0v5M4.500 0v5" stroke="#666" stroke-width=".6"/></svg><svg style="left:231px;top:2.500px" width="3" height="5"><path d="M.2 .5L2.700 2.500 .2 4.500z" fill="#505050"/></svg></div>
<div style="position:absolute;left:239px;top:435px;width:12px;height:11px;background:#f0f0f0"></div>
</div>
<div class="panel" id="pMid" style="left:255px;top:47px;width:480px;height:446px">
<div class="tabbar"></div>
<div class="tab-act" style="left:0;width:85px"></div>
<svg style="left:3.500px;top:4px" width="10" height="10" viewBox="0 0 10 10"><path d="M1 .4V9h8.600" fill="none" stroke="#d8222a" stroke-width="1.100"/><path d="M2 8L5 5l1.200.8L9.200 1.400" fill="none" stroke="#e8b628" stroke-width="1"/><path d="M2.400 6.600L5.400 4.600 9 2.400" fill="none" stroke="#8ac24a" stroke-width=".7"/></svg>
<div class="t" style="left:16.00px;top:5.00px;letter-spacing:-0.091px;">Mass Summary</div>
<svg style="left:70.500px;top:6px" width="7.500" height="7.500"><use href="#i-close"/></svg>
<svg class="ic" style="left:85px;top:4px;opacity:.95"><use href="#i-sated"/></svg>
<div class="t dim" style="left:97.30px;top:5.00px;letter-spacing:-0.076px;">Satellite</div>
<svg class="ic" style="left:142px;top:4px;opacity:.95"><use href="#i-sated"/></svg>
<div class="t dim" style="left:154.60px;top:5.00px;letter-spacing:-0.053px;">DataHandlingSystem</div>
<svg class="ic" style="left:242px;top:4px;opacity:.95"><use href="#i-sated"/></svg>
<div class="t dim" style="left:254.50px;top:5.00px;letter-spacing:-0.204px;">SystemParameters</div>
<svg class="ic" style="left:334px;top:4px;opacity:.95"><use href="#i-sated"/></svg>
<div class="t dim" style="left:346.30px;top:5.00px;letter-spacing:-0.184px;">SystemMassParameters</div>
<div class="mm" style="left:451px"></div><div class="mx" style="left:464px"></div>
<div style="position:absolute;left:0;top:32px;width:468px;height:403px;overflow:hidden">
<div style="position:absolute;left:6.00px;top:6.30px;width:462.00px;height:1px;background:#ececec"></div>
<div style="position:absolute;left:6.00px;top:18.00px;width:462.00px;height:1px;background:#ececec"></div>
<div style="position:absolute;left:100.00px;top:0.00px;width:1px;height:21.00px;background:#e6e6e6"></div>
<div style="position:absolute;left:194.00px;top:0.00px;width:1px;height:21.00px;background:#e6e6e6"></div>
<div style="position:absolute;left:288.00px;top:0.00px;width:1px;height:21.00px;background:#e6e6e6"></div>
<div style="position:absolute;left:382.00px;top:0.00px;width:1px;height:21.00px;background:#e6e6e6"></div>
<div style="position:absolute;left:5.00px;top:0.00px;width:1px;height:21.50px;background:#8e8e8e"></div>
<div style="position:absolute;left:5.00px;top:20.50px;width:463.00px;height:1px;background:#8e8e8e"></div>
<div style="position:absolute;left:6px;top:29.5px;width:462px;height:8.500px;background:linear-gradient(#fafafa,#efefef)"></div>
<div style="position:absolute;left:6.00px;top:38.20px;width:462.00px;height:1px;background:#ededed"></div>
<div style="position:absolute;left:6.00px;top:50.10px;width:462.00px;height:1px;background:#ededed"></div>
<div style="position:absolute;left:6.00px;top:62.00px;width:462.00px;height:1px;background:#ededed"></div>
<div style="position:absolute;left:6.00px;top:73.90px;width:462.00px;height:1px;background:#ededed"></div>
<div style="position:absolute;left:6.00px;top:85.80px;width:462.00px;height:1px;background:#ededed"></div>
<div style="position:absolute;left:6.00px;top:97.70px;width:462.00px;height:1px;background:#ededed"></div>
<div style="position:absolute;left:6.00px;top:109.60px;width:462.00px;height:1px;background:#ededed"></div>
<div style="position:absolute;left:6.00px;top:121.50px;width:462.00px;height:1px;background:#ededed"></div>
<div style="position:absolute;left:6.00px;top:133.40px;width:462.00px;height:1px;background:#ededed"></div>
<div style="position:absolute;left:6.00px;top:145.30px;width:462.00px;height:1px;background:#ededed"></div>
<div style="position:absolute;left:194.00px;top:24.00px;width:1px;height:137.00px;background:#e3e3e3"></div>
<div style="position:absolute;left:288.00px;top:24.00px;width:1px;height:137.00px;background:#e3e3e3"></div>
<div style="position:absolute;left:382.00px;top:24.00px;width:1px;height:137.00px;background:#e3e3e3"></div>
<div style="position:absolute;left:5.00px;top:23.20px;width:463.00px;height:1px;background:#8e8e8e"></div>
<div style="position:absolute;left:5.00px;top:23.20px;width:1px;height:138.10px;background:#8e8e8e"></div>
<div style="position:absolute;left:5.00px;top:160.50px;width:463.00px;height:1px;background:#a0a0a0"></div>
<div class="t" style="left:198.20px;top:26.90px;letter-spacing:0.072px;">Mass w/o margin [kg]</div>
<div class="t" style="left:292.00px;top:26.90px;letter-spacing:0.135px;">Margin [%]</div>
<div class="t" style="left:386.00px;top:26.90px;letter-spacing:0.056px;">Mass with margin [kg]</div>
<div class="t" style="left:10.60px;top:40.90px;letter-spacing:-0.055px;">Total dry mass:</div>
<div class="t" style="left:197.80px;top:40.90px;letter-spacing:-0.373px;">1888.00</div>
<div class="t" style="left:386.00px;top:40.90px;letter-spacing:-0.373px;">1982.40</div>
<div class="t" style="left:10.60px;top:52.80px;letter-spacing:-0.114px;">System margin:</div>
<div class="t" style="left:292.00px;top:52.80px;letter-spacing:-0.454px;">20.00</div>
<div class="t" style="left:386.00px;top:52.80px;letter-spacing:-0.490px;">396.48</div>
<div class="t" style="left:10.60px;top:64.70px;letter-spacing:-0.170px;font-size:7.5px;font-weight:700;">Total dry mass with system margin:</div>
<div class="t" style="left:386.00px;top:64.70px;letter-spacing:0.127px;font-size:7.5px;font-weight:700;">2378.88</div>
<div class="t" style="left:10.60px;top:76.60px;letter-spacing:-0.078px;">Propellant:</div>
<div class="t" style="left:386.00px;top:76.60px;letter-spacing:-0.373px;">1330.00</div>
<div class="t" style="left:10.60px;top:88.50px;letter-spacing:-0.135px;">Adapter mass:</div>
<div class="t" style="left:386.00px;top:88.50px;letter-spacing:-0.490px;">300.00</div>
<div class="t" style="left:10.60px;top:100.40px;letter-spacing:-0.478px;font-size:7.5px;font-weight:700;">Launch mass:</div>
<div class="t" style="left:386.00px;top:100.40px;letter-spacing:0.127px;font-size:7.5px;font-weight:700;">4008.88</div>
<div class="t" style="left:10.60px;top:112.30px;letter-spacing:-0.055px;">Max launcher capacity:</div>
<div class="t" style="left:386.00px;top:112.30px;letter-spacing:-0.373px;">4150.00</div>
<div class="t" style="left:10.60px;top:124.20px;letter-spacing:-0.040px;color:#2a8f2a;">Buffer to launch mass:</div>
<div class="t" style="left:386.00px;top:124.20px;letter-spacing:-0.490px;color:#2a8f2a;">141.12</div>
<div class="t" style="left:135.50px;top:164.70px;letter-spacing:-0.131px;font-size:7.5px;font-weight:700;color:#000;">Contribution to total mass in [%]</div>
<svg style="left:0;top:0" width="468" height="403"><circle cx="195.6" cy="294.6" r="94.5" fill="#888"/><path d="M193.0 292.0L193.00 197.50A94.5 94.5 0 0 1 274.84 339.25z" fill="#ff5555" stroke="#b0b0b0" stroke-width=".4"/><path d="M193.0 292.0L274.84 339.25A94.5 94.5 0 0 1 260.98 357.65z" fill="#5555ff" stroke="#b0b0b0" stroke-width=".4"/><path d="M193.0 292.0L260.98 357.65A94.5 94.5 0 0 1 151.13 376.72z" fill="#55ff55" stroke="#b0b0b0" stroke-width=".4"/><path d="M193.0 292.0L151.13 376.72A94.5 94.5 0 0 1 149.22 375.75z" fill="#ffff55" stroke="#b0b0b0" stroke-width=".4"/><path d="M193.0 292.0L149.22 375.75A94.5 94.5 0 0 1 135.87 367.27z" fill="#ff55ff" stroke="#b0b0b0" stroke-width=".4"/><path d="M193.0 292.0L135.87 367.27A94.5 94.5 0 0 1 193.00 197.50z" fill="#55ffff" stroke="#b0b0b0" stroke-width=".4"/><path d="M299.2 243.0Q285.0 243.0 267.0 249.0" fill="none" stroke="#111" stroke-width=".65"/><rect x="299.2" y="237.6" width="33.8" height="11.6" fill="#fff" stroke="#555" stroke-width=".6"/><path d="M87.3 261.0Q101.0 261.0 113.0 265.0" fill="none" stroke="#111" stroke-width=".65"/><rect x="62.8" y="255.5" width="24.5" height="11.5" fill="#fff" stroke="#555" stroke-width=".6"/><path d="M299.2 352.0Q280.0 353.0 261.0 343.0" fill="none" stroke="#111" stroke-width=".65"/><rect x="299.2" y="346.6" width="73.6" height="11.2" fill="#fff" stroke="#555" stroke-width=".6"/><path d="M296.4 390.0C250.0 389.0 225.0 383.0 208.0 365.0" fill="none" stroke="#111" stroke-width=".65"/><rect x="296.4" y="384.6" width="39.6" height="11.4" fill="#fff" stroke="#555" stroke-width=".6"/><path d="M89.0 372.0Q125.0 377.0 147.0 365.0" fill="none" stroke="#111" stroke-width=".65"/><rect x="33.4" y="366.2" width="55.6" height="11.6" fill="#fff" stroke="#555" stroke-width=".6"/><path d="M88.0 386.0Q125.0 381.0 153.0 373.0" fill="none" stroke="#111" stroke-width=".65"/><rect x="64.4" y="380.5" width="23.6" height="11.0" fill="#fff" stroke="#555" stroke-width=".6"/></svg>
<div class="t" style="left:300.40px;top:239.10px;letter-spacing:-0.231px;font-size:8.3px;color:#222;">Structure</div>
<div class="t" style="left:64.00px;top:256.95px;letter-spacing:-0.245px;font-size:8.3px;color:#222;">Power</div>
<div class="t" style="left:300.40px;top:347.90px;letter-spacing:-0.365px;font-size:8.3px;color:#222;">DataHandlingSystem</div>
<div class="t" style="left:297.60px;top:386.00px;letter-spacing:-0.182px;font-size:8.3px;color:#222;">Propulsion</div>
<div class="t" style="left:34.60px;top:367.70px;letter-spacing:-0.328px;font-size:8.3px;color:#222;">Communication</div>
<div class="t" style="left:65.60px;top:381.70px;letter-spacing:-0.531px;font-size:8.3px;color:#222;">AOCS</div>
</div>
<div class="vsb" style="left:468px;top:32px;height:403px"><svg style="left:2.500px;top:3.500px" width="5" height="3"><path d="M.5 2.800L2.500 .3 4.500 2.800z" fill="#505050"/></svg><div class="th" style="top:108px;height:272px"></div><svg style="left:2.500px;top:241.5px" width="5" height="5"><path d="M0 .5h5M0 2.500h5M0 4.500h5" stroke="#666" stroke-width=".6"/></svg><svg style="left:2.500px;top:396px" width="5" height="3"><path d="M.5 .2L2.500 2.700 4.500 .2z" fill="#505050"/></svg></div>
<div class="hsb" style="left:5px;top:435px;width:463px"><svg style="left:2px;top:2.500px" width="3" height="5"><path d="M2.800 .5L.3 2.500 2.800 4.500z" fill="#505050"/></svg><div class="th" style="left:8.399999999999977px;width:421.6px"></div><svg style="left:216.2px;top:2.500px" width="5" height="5"><path d="M.5 0v5M2.500 0v5M4.500 0v5" stroke="#666" stroke-width=".6"/></svg><svg style="left:456.5px;top:2.500px" width="3" height="5"><path d="M.2 .5L2.700 2.500 .2 4.500z" fill="#505050"/></svg></div>
<div style="position:absolute;left:468px;top:435px;width:11px;height:11px;background:#f0f0f0"></div>
</div>
<div class="panel" id="pVtk" style="left:737px;top:47px;width:461px;height:447px">
<div class="tabbar"></div>
<div class="tab-act" style="left:0;width:76px"></div>
<svg style="left:2.500px;top:3.500px" width="11" height="11" viewBox="0 0 10 10"><circle cx="5" cy="4.400" r="4.200" fill="#1a56d6"/><path d="M3 2.200c1.500-1.200 3.500-.8 3.800.6.200 1-1 1.200-1.400 2.200-.3.800.8 1.600-.2 2.200-1 .5-2.400-.2-2.600-1.200-.2-1.200 1-1.400.8-2.200-.1-.6-.9-.8-.4-1.600z" fill="#2fa83a"/><path d="M.4 8.400l1.800-1.600v1h5.800v1.200H2.200v1z" fill="#e8221a"/><path d="M4 6.400h2.600v1.400H4z" fill="#8a5a22"/></svg>
<div class="t" style="left:15.80px;top:5.00px;letter-spacing:-0.145px;">3D Vtk Viewer</div>
<svg style="left:65.5px;top:6px" width="7.500" height="7.500"><use href="#i-close"/></svg>
<div class="mm" style="left:431px"></div><div class="mx" style="left:445px"></div>
<div style="position:absolute;left:221.70000000000005px;top:26.400000000000006px;width:8px;height:8px;border:1px solid #8e8f8f;background:linear-gradient(135deg,#d8d8d8,#fdfdfd)"></div>
<div class="t" style="left:231.80px;top:26.30px;letter-spacing:-0.227px;">Local Axes</div>
<div style="position:absolute;left:272.70000000000005px;top:26.400000000000006px;width:8px;height:8px;border:1px solid #8e8f8f;background:linear-gradient(135deg,#d8d8d8,#fdfdfd)"></div>
<div class="t" style="left:282.50px;top:26.30px;letter-spacing:-0.229px;">Global Axes</div>
<div style="position:absolute;left:327px;top:24.799999999999997px;width:41.5px;height:14px;border:1px solid #858585;border-radius:1.500px;background:linear-gradient(#f4f4f4,#ebebeb 48%,#dddddd 52%,#cfcfcf)"></div><div class="t" style="left:330.50px;top:27.10px;letter-spacing:-0.121px;color:#000;">Front View</div>
<div style="position:absolute;left:373px;top:24.799999999999997px;width:37.5px;height:14px;border:1px solid #858585;border-radius:1.500px;background:linear-gradient(#f4f4f4,#ebebeb 48%,#dddddd 52%,#cfcfcf)"></div><div class="t" style="left:376.25px;top:27.10px;letter-spacing:-0.246px;color:#000;">Side View</div>
<div style="position:absolute;left:415px;top:24.799999999999997px;width:37px;height:14px;border:1px solid #858585;border-radius:1.500px;background:linear-gradient(#f4f4f4,#ebebeb 48%,#dddddd 52%,#cfcfcf)"></div><div class="t" style="left:418.50px;top:27.10px;letter-spacing:-0.037px;color:#000;">Top View</div>
<svg style="left:5.2999999999999545px;top:46.2px" width="450.6" height="396" viewBox="742.3 93.2 450.6 396"><defs><clipPath id="cv"><rect x="742.3" y="93.2" width="450.6" height="396"/></clipPath><radialGradient id="sph" cx=".42" cy=".38" r=".62"><stop offset="0" stop-color="#ffe040"/><stop offset=".6" stop-color="#f8cc08"/><stop offset="1" stop-color="#d9a800"/></radialGradient><linearGradient id="cyl" x1="0" x2="1"><stop offset="0" stop-color="#087a08"/><stop offset=".5" stop-color="#0c960c"/><stop offset="1" stop-color="#066006"/></linearGradient></defs><rect x="742.3" y="93.2" width="450.6" height="396" fill="#000"/><g clip-path="url(#cv)"><polygon points="987.1,173.1 1067.0,214.3 1035.7,281.0 1026.7,293.5 1000.0,300.0 930.0,250.0 937.3,232.4 946.4,207.5" fill="#a25000" /><polygon points="987.1,173.1 946.4,207.5 937.3,232.4 930.0,250.0 955.0,262.0 975.0,205.0" fill="#7c3e00" /><polygon points="1067.0,214.3 1035.7,281.0 1026.7,293.5 1020.0,285.0 1052.0,222.0 1035.7,225.6" fill="#8c4600" /><polygon points="956.0,238.0 1012.0,272.0 1003.0,300.0 940.0,262.0" fill="#d9741c" /><polygon points="948.0,246.0 1000.0,278.0 995.0,296.0 938.0,262.0" fill="#e27c22" /><polygon points="865.1,276.7 918.0,229.0 1013.5,279.5 992.9,324.7 932.9,412.4 842.4,355.2" fill="#7a3f25" /><polygon points="865.1,276.7 918.0,229.0 935.0,240.0 905.0,275.0 880.0,340.0 842.4,355.2" fill="#5b2d1c" /><polygon points="992.9,324.7 932.9,412.4 940.0,385.0 965.0,330.0 975.0,310.0" fill="#86452a" /><polygon points="918.7,293.0 927.3,273.0 1005.0,318.0 999.7,328.0" fill="#bd5f25" /><polygon points="880.0,262.0 918.0,229.0 1013.5,279.5 1004.0,312.0" fill="#a8562a" /><ellipse cx="899" cy="350" rx="53" ry="53" fill="#a89a00" fill-opacity=".42"/><ellipse cx="905" cy="341" rx="51" ry="50" fill="#b89a10" fill-opacity=".55"/><circle cx="999.5" cy="234.7" r="28.3" fill="url(#sph)"/><line x1="872.1" y1="329.2" x2="971.3" y2="234.7" stroke="#c6a612" stroke-width="6.8"/><line x1="871.1" y1="328.2" x2="970.3" y2="233.7" stroke="#e2cc10" stroke-width="4.6"/><line x1="929.5" y1="364.3" x2="1035.7" y2="242.6" stroke="#c6a612" stroke-width="6.8"/><line x1="928.5" y1="363.3" x2="1034.7" y2="241.6" stroke="#e2cc10" stroke-width="4.6"/><ellipse cx="872.1" cy="329.2" rx="4.300" ry="3.300" fill="#f2e210" transform="rotate(-43 872.1 329.2)"/><ellipse cx="929.5" cy="364.3" rx="4.300" ry="3.300" fill="#f2e210" transform="rotate(-49 929.5 364.3)"/><circle cx="1035.7" cy="242.6" r="2.500" fill="#e3bd00"/><polygon points="1015.4,188.3 1038.0,176.0 1058.0,180.0 1070.8,198.5 1069.7,205.2 1035.7,225.6" fill="#0c640c" fill-opacity=".62"/><polygon points="1035.7,225.6 1069.7,205.2 1070.8,198.5 1036.0,216.0" fill="#0a420a" fill-opacity=".6"/><path d="M1027.3999999999999 177L1028.0 200.7A7.700 6.200 0 0 0 1043.4 200.7L1042.8 177z" fill="url(#cyl)"/><ellipse cx="1035.1" cy="177" rx="7.700" ry="6.200" fill="#11a811"/><ellipse cx="1035.7" cy="200.7" rx="7.700" ry="6.200" fill="#10b410"/><path d="M1042.8 169.5L1042.3 193.5A7.700 6.200 0 0 0 1057.7 193.5L1058.2 169.5z" fill="url(#cyl)"/><ellipse cx="1050.5" cy="169.5" rx="7.700" ry="6.200" fill="#11a811"/><ellipse cx="1050" cy="193.5" rx="7.700" ry="6.200" fill="#10b410"/><polygon points="1002.9,181.5 1009.7,174.7 1026.7,183.8 1022.0,190.0" fill="#8a8a8a" fill-opacity=".85"/><polygon points="1002.9,181.5 1024.4,186.0 989.4,268.6 969.0,266.3" fill="#ffffff" fill-opacity=".38"/><polygon points="1002.9,181.5 1007.5,182.5 973.5,266.8 969.0,266.3" fill="#ffffff" fill-opacity=".22"/><polygon points="1019.8,185.0 1024.4,186.0 989.4,268.6 985.0,268.1" fill="#cccccc" fill-opacity=".3"/><polygon points="740.0,131.2 1196.0,391.5 1196.0,440.4 740.0,173.3" fill="#7412de" fill-opacity="0.93"/><polygon points="880.0,211.1 1000.0,279.6 1000.0,325.6 880.0,255.3" fill="#9322ea" fill-opacity="0.35"/><polygon points="742.5,122.0 749.6,117.7 822.6,158.6 818.8,174.1 761.3,207.8 740.0,196.5" fill="#350069" fill-opacity=".57"/><polygon points="838.0,167.7 914.6,211.4 910.4,226.3 862.7,265.5 778.0,215.6 781.5,206.0" fill="#350069" fill-opacity=".57"/><polygon points="1045.3,285.3 1131.0,334.6 1093.2,404.6 1001.3,349.8" fill="#350069" fill-opacity=".57"/><polygon points="1149.1,344.7 1196.0,369.0 1196.0,466.0 1113.2,416.6" fill="#350069" fill-opacity=".57"/><line x1="927.3" y1="277.1" x2="953" y2="247" stroke="#c860c8" stroke-width="5.600" stroke-opacity=".45"/><line x1="979.3" y1="306.6" x2="1008" y2="274" stroke="#c860c8" stroke-width="5.600" stroke-opacity=".45"/><line x1="740" y1="131.17" x2="1196" y2="391.55" stroke="#fff" stroke-width="0.7" stroke-opacity="0.6"/><line x1="740" y1="139.26" x2="1196" y2="401.64" stroke="#d9b8ff" stroke-width="0.5" stroke-opacity="0.4"/><line x1="740" y1="164.14" x2="1196" y2="429.67" stroke="#fff" stroke-width="0.9" stroke-opacity="0.85"/><line x1="740" y1="173.34" x2="1196" y2="440.37" stroke="#e8d8ff" stroke-width="0.6" stroke-opacity="0.6"/></g></svg>
</div>
<div class="panel" id="pTab" style="left:2px;top:497px;width:475.500px;height:235px">
<div class="tabbar" style="height:15.500px;background:#d5e1f0"></div>
<div class="tab-act" style="left:42.5px;width:70px;height:15.500px;background:#fff"></div>
<svg style="left:1.500px;top:3.500px" width="10" height="9" viewBox="0 0 10 9"><rect x=".4" y=".4" width="3.600" height="2.600" fill="#eaf3fd" stroke="#4a90d9" stroke-width=".7"/><rect x=".4" y="5.600" width="3.600" height="2.600" fill="#eaf3fd" stroke="#4a90d9" stroke-width=".7"/><path d="M2.200 3v2.600M4 1.700h2M4 7h2M6 4.300h3.600M6.800 1.700h2.600M6.800 7h2.600" stroke="#4a90d9" stroke-width=".7" fill="none"/></svg>
<div class="t" style="left:14.00px;top:3.80px;letter-spacing:0.077px;color:#222;">Outline</div>
<svg style="left:44px;top:2.500px" width="10" height="10"><use href="#i-mode"/></svg>
<div class="t" style="left:56.80px;top:3.80px;letter-spacing:0.066px;">Mode Table</div>
<svg style="left:100.8px;top:4.500px" width="7.500" height="7.500"><use href="#i-close"/></svg>
<div class="mm" style="left:445.5px;top:3.500px"></div><div class="mx" style="left:459.5px;top:3.500px"></div>
<div style="position:absolute;left:0;top:15.500px;width:475.500px;height:22.500px;background:linear-gradient(#fff 0,#fff 25%,#e4ecf6 100%);border-bottom:1px solid #d3ddea"></div>
<svg style="left:3px;top:22px" width="11.500" height="11.500"><use href="#i-mode"/></svg>
<div class="t" style="left:17.00px;top:23.00px;letter-spacing:-0.030px;font-size:10.2px;font-weight:700;color:#1f4e8a;line-height:12px;">Mode Overview Table: Satellite</div>
<div style="position:absolute;left:3.5px;top:42.39999999999998px;width:467.1px;height:186.60000000000002px;border:1px solid #c6c8ce;border-top-color:#a8abb1;border-bottom-color:#d2d4d9"></div>
<div style="position:absolute;left:4.5px;top:43.39999999999998px;width:454.9px;height:14px;background:linear-gradient(#fff,#fff 50%,#f7f8fa);border-bottom:1px solid #e0e3e8"></div>
<div style="position:absolute;left:129px;top:43.39999999999998px;width:1px;height:14px;background:#e3e5ea"></div>
<div style="position:absolute;left:129px;top:58px;width:1px;height:170px;background:#f0f0f0"></div>
<div style="position:absolute;left:224px;top:43.39999999999998px;width:1px;height:14px;background:#e3e5ea"></div>
<div style="position:absolute;left:224px;top:58px;width:1px;height:170px;background:#f0f0f0"></div>
<div style="position:absolute;left:254.39999999999998px;top:43.39999999999998px;width:1px;height:14px;background:#e3e5ea"></div>
<div style="position:absolute;left:254.39999999999998px;top:58px;width:1px;height:170px;background:#f0f0f0"></div>
<div style="position:absolute;left:316.6px;top:43.39999999999998px;width:1px;height:14px;background:#e3e5ea"></div>
<div style="position:absolute;left:316.6px;top:58px;width:1px;height:170px;background:#f0f0f0"></div>
<div style="position:absolute;left:379.6px;top:43.39999999999998px;width:1px;height:14px;background:#e3e5ea"></div>
<div style="position:absolute;left:379.6px;top:58px;width:1px;height:170px;background:#f0f0f0"></div>
<div style="position:absolute;left:442.4px;top:43.39999999999998px;width:1px;height:14px;background:#e3e5ea"></div>
<div style="position:absolute;left:442.4px;top:58px;width:1px;height:170px;background:#f0f0f0"></div>
<div class="t" style="left:8.00px;top:46.90px;letter-spacing:-0.896px;">SEI</div>
<div class="t" style="left:133.40px;top:46.90px;letter-spacing:-0.157px;">Parameter</div>
<div class="t" style="left:226.60px;top:46.90px;letter-spacing:-0.084px;">Unit</div>
<div class="t" style="left:290.40px;top:46.90px;letter-spacing:0.069px;">default</div>
<div class="t" style="left:343.00px;top:46.90px;letter-spacing:-0.149px;">SafeMode</div>
<div class="t" style="left:413.60px;top:46.90px;letter-spacing:-0.240px;">Science</div>
<div style="position:absolute;left:4.5px;top:58.60000000000002px;width:454.7px;height:10.800px;border:1px solid #b7d2f0;border-radius:1.500px;background:linear-gradient(#f2f7fd,#dfebfa)"></div>
<svg style="left:11.0px;top:62.40px" width="4" height="4"><path d="M3.600 0V3.600H0z" fill="#333"/></svg>
<div class="t" style="left:19.40px;top:59.90px;letter-spacing:-0.120px;">Satellite</div>
<div class="t" style="left:133.40px;top:59.90px;letter-spacing:0.042px;">powerAvgTotal</div>
<div class="t" style="left:226.60px;top:59.90px;letter-spacing:-0.679px;">W</div>
<div class="t" style="left:290.90px;top:59.90px;letter-spacing:-0.487px;">249.320</div>
<div class="t" style="left:353.70px;top:59.90px;letter-spacing:-0.487px;">101.405</div>
<div class="t" style="left:416.30px;top:59.90px;letter-spacing:-0.487px;">183.154</div>
<div style="position:absolute;left:4.5px;top:69.55px;width:454.9px;height:1px;background:#f3f3f3"></div>
<svg style="left:22.9px;top:73.65px" width="4" height="4"><path d="M3.600 0V3.600H0z" fill="#333"/></svg>
<div class="t" style="left:31.30px;top:71.15px;letter-spacing:-0.092px;">Power</div>
<div class="t" style="left:133.40px;top:71.15px;letter-spacing:0.042px;">powerAvgTotal</div>
<div class="t" style="left:226.60px;top:71.15px;letter-spacing:-0.679px;">W</div>
<div class="t" style="left:294.60px;top:71.15px;letter-spacing:-0.490px;">28.000</div>
<div class="t" style="left:357.40px;top:71.15px;letter-spacing:-0.490px;">20.000</div>
<div class="t" style="left:420.00px;top:71.15px;letter-spacing:-0.490px;">28.000</div>
<div style="position:absolute;left:4.5px;top:80.80px;width:454.9px;height:1px;background:#f3f3f3"></div>
<div class="t" style="left:43.20px;top:82.40px;letter-spacing:-0.092px;">Power</div>
<div class="t" style="left:133.40px;top:82.40px;letter-spacing:-0.077px;">powerAvg</div>
<div class="t" style="left:226.60px;top:82.40px;letter-spacing:-0.679px;">W</div>
<div class="t" style="left:294.60px;top:82.40px;letter-spacing:-0.490px;">17.000</div>
<div class="t" style="left:361.10px;top:82.40px;letter-spacing:-0.494px;">9.000</div>
<div class="t" style="left:420.00px;top:82.40px;letter-spacing:-0.490px;">17.000</div>
<div style="position:absolute;left:4.5px;top:92.05px;width:454.9px;height:1px;background:#f3f3f3"></div>
<svg style="left:35.3px;top:94.95px" width="4" height="6"><path d="M.4.500L3.200 3 .4 5.500z" fill="#fff" stroke="#a6a6a6" stroke-width=".6"/></svg>
<div class="t" style="left:43.20px;top:93.65px;letter-spacing:-0.195px;">SolarWings</div>
<div class="t" style="left:133.40px;top:93.65px;letter-spacing:0.042px;">powerAvgTotal</div>
<div class="t" style="left:226.60px;top:93.65px;letter-spacing:-0.679px;">W</div>
<div class="t" style="left:294.60px;top:93.65px;letter-spacing:-0.397px;">11.000</div>
<div class="t" style="left:357.40px;top:93.65px;letter-spacing:-0.397px;">11.000</div>
<div class="t" style="left:420.00px;top:93.65px;letter-spacing:-0.397px;">11.000</div>
<div style="position:absolute;left:4.5px;top:103.30px;width:454.9px;height:1px;background:#f3f3f3"></div>
<svg style="left:22.9px;top:107.40px" width="4" height="4"><path d="M3.600 0V3.600H0z" fill="#333"/></svg>
<div class="t" style="left:31.30px;top:104.90px;letter-spacing:0.161px;">Communication</div>
<div class="t" style="left:133.40px;top:104.90px;letter-spacing:0.042px;">powerAvgTotal</div>
<div class="t" style="left:226.60px;top:104.90px;letter-spacing:-0.679px;">W</div>
<div class="t" style="left:294.60px;top:104.90px;letter-spacing:-0.490px;">23.320</div>
<div class="t" style="left:357.40px;top:104.90px;letter-spacing:-0.490px;">21.004</div>
<div class="t" style="left:420.00px;top:104.90px;letter-spacing:-0.490px;">23.320</div>
<div style="position:absolute;left:4.5px;top:114.55px;width:454.9px;height:1px;background:#f3f3f3"></div>
<div class="t" style="left:43.20px;top:116.15px;letter-spacing:0.161px;">Communication</div>
<div class="t" style="left:133.40px;top:116.15px;letter-spacing:-0.077px;">powerAvg</div>
<div class="t" style="left:226.60px;top:116.15px;letter-spacing:-0.679px;">W</div>
<div class="t" style="left:294.60px;top:116.15px;letter-spacing:-0.490px;">21.000</div>
<div class="t" style="left:357.40px;top:116.15px;letter-spacing:-0.490px;">21.000</div>
<div class="t" style="left:420.00px;top:116.15px;letter-spacing:-0.490px;">21.000</div>
<div style="position:absolute;left:4.5px;top:125.80px;width:454.9px;height:1px;background:#f3f3f3"></div>
<svg style="left:35.3px;top:128.70px" width="4" height="6"><path d="M.4.500L3.200 3 .4 5.500z" fill="#fff" stroke="#a6a6a6" stroke-width=".6"/></svg>
<div class="t" style="left:43.20px;top:127.40px;letter-spacing:-0.020px;">Antenna</div>
<div class="t" style="left:133.40px;top:127.40px;letter-spacing:0.042px;">powerAvgTotal</div>
<div class="t" style="left:226.60px;top:127.40px;letter-spacing:-0.679px;">W</div>
<div class="t" style="left:298.30px;top:127.40px;letter-spacing:-0.494px;">2.320</div>
<div class="t" style="left:361.10px;top:127.40px;letter-spacing:-0.494px;">0.004</div>
<div class="t" style="left:423.70px;top:127.40px;letter-spacing:-0.494px;">2.320</div>
<div style="position:absolute;left:4.5px;top:137.05px;width:454.9px;height:1px;background:#f3f3f3"></div>
<svg style="left:23.4px;top:139.95px" width="4" height="6"><path d="M.4.500L3.200 3 .4 5.500z" fill="#fff" stroke="#a6a6a6" stroke-width=".6"/></svg>
<div class="t" style="left:31.30px;top:138.65px;letter-spacing:-0.514px;">AOCS</div>
<div class="t" style="left:133.40px;top:138.65px;letter-spacing:0.042px;">powerAvgTotal</div>
<div class="t" style="left:226.60px;top:138.65px;letter-spacing:-0.679px;">W</div>
<div class="t" style="left:294.60px;top:138.65px;letter-spacing:-0.490px;">88.000</div>
<div class="t" style="left:361.10px;top:138.65px;letter-spacing:-0.494px;">0.085</div>
<div class="t" style="left:423.70px;top:138.65px;letter-spacing:-0.494px;">0.150</div>
<div style="position:absolute;left:4.5px;top:148.30px;width:454.9px;height:1px;background:#f3f3f3"></div>
<svg style="left:22.9px;top:152.40px" width="4" height="4"><path d="M3.600 0V3.600H0z" fill="#333"/></svg>
<div class="t" style="left:31.30px;top:149.90px;letter-spacing:-0.024px;">Propulsion</div>
<div class="t" style="left:133.40px;top:149.90px;letter-spacing:0.042px;">powerAvgTotal</div>
<div class="t" style="left:226.60px;top:149.90px;letter-spacing:-0.679px;">W</div>
<div class="t" style="left:294.60px;top:149.90px;letter-spacing:-0.490px;">27.000</div>
<div class="t" style="left:361.10px;top:149.90px;letter-spacing:-0.494px;">5.000</div>
<div class="t" style="left:420.00px;top:149.90px;letter-spacing:-0.490px;">27.000</div>
<div style="position:absolute;left:4.5px;top:159.55px;width:454.9px;height:1px;background:#f3f3f3"></div>
<div class="t" style="left:43.20px;top:161.15px;letter-spacing:-0.024px;">Propulsion</div>
<div class="t" style="left:133.40px;top:161.15px;letter-spacing:-0.077px;">powerAvg</div>
<div class="t" style="left:226.60px;top:161.15px;letter-spacing:-0.679px;">W</div>
<div class="t" style="left:294.60px;top:161.15px;letter-spacing:-0.490px;">27.000</div>
<div class="t" style="left:361.10px;top:161.15px;letter-spacing:-0.494px;">5.000</div>
<div class="t" style="left:420.00px;top:161.15px;letter-spacing:-0.490px;">27.000</div>
<div style="position:absolute;left:4.5px;top:170.80px;width:454.9px;height:1px;background:#f3f3f3"></div>
<svg style="left:22.9px;top:174.90px" width="4" height="4"><path d="M3.600 0V3.600H0z" fill="#333"/></svg>
<div class="t" style="left:31.30px;top:172.40px;letter-spacing:-0.070px;">DataHandlingSystem</div>
<div class="t" style="left:133.40px;top:172.40px;letter-spacing:0.042px;">powerAvgTotal</div>
<div class="t" style="left:226.60px;top:172.40px;letter-spacing:-0.679px;">W</div>
<div class="t" style="left:294.60px;top:172.40px;letter-spacing:-0.490px;">53.000</div>
<div class="t" style="left:357.40px;top:172.40px;letter-spacing:-0.490px;">77.000</div>
<div class="t" style="left:420.00px;top:172.40px;letter-spacing:-0.490px;">53.000</div>
<div style="position:absolute;left:4.5px;top:182.05px;width:454.9px;height:1px;background:#f3f3f3"></div>
<div class="t" style="left:43.20px;top:183.65px;letter-spacing:-0.070px;">DataHandlingSystem</div>
<div class="t" style="left:133.40px;top:183.65px;letter-spacing:-0.077px;">powerAvg</div>
<div class="t" style="left:226.60px;top:183.65px;letter-spacing:-0.679px;">W</div>
<div class="t" style="left:298.30px;top:183.65px;letter-spacing:-0.494px;">0.000</div>
<div class="t" style="left:361.10px;top:183.65px;letter-spacing:-0.494px;">0.000</div>
<div class="t" style="left:423.70px;top:183.65px;letter-spacing:-0.494px;">0.000</div>
<div style="position:absolute;left:4.5px;top:193.30px;width:454.9px;height:1px;background:#f3f3f3"></div>
<svg style="left:34.8px;top:197.40px" width="4" height="4"><path d="M3.600 0V3.600H0z" fill="#333"/></svg>
<div class="t" style="left:43.20px;top:194.90px;letter-spacing:-0.016px;">CentralBoardComputer</div>
<div class="t" style="left:133.40px;top:194.90px;letter-spacing:0.042px;">powerAvgTotal</div>
<div class="t" style="left:226.60px;top:194.90px;letter-spacing:-0.679px;">W</div>
<div class="t" style="left:294.60px;top:194.90px;letter-spacing:-0.490px;">53.000</div>
<div class="t" style="left:357.40px;top:194.90px;letter-spacing:-0.490px;">77.000</div>
<div class="t" style="left:420.00px;top:194.90px;letter-spacing:-0.490px;">53.000</div>
<div style="position:absolute;left:4.5px;top:204.55px;width:454.9px;height:1px;background:#f3f3f3"></div>
<div style="position:absolute;left:55.1px;top:206.15px;width:73.9px;height:9px;overflow:hidden"><div class="t" style="left:0.00px;top:0.00px;letter-spacing:-0.016px;">CentralBoardComputer</div></div>
<div class="t" style="left:133.40px;top:206.15px;letter-spacing:-0.077px;">powerAvg</div>
<div class="t" style="left:226.60px;top:206.15px;letter-spacing:-0.679px;">W</div>
<div class="t" style="left:294.60px;top:206.15px;letter-spacing:-0.490px;">53.000</div>
<div class="t" style="left:357.40px;top:206.15px;letter-spacing:-0.490px;">77.000</div>
<div class="t" style="left:420.00px;top:206.15px;letter-spacing:-0.490px;">53.000</div>
<div style="position:absolute;left:4.5px;top:215.80px;width:454.9px;height:1px;background:#f3f3f3"></div>
<svg style="left:22.9px;top:219.90px" width="4" height="4"><path d="M3.600 0V3.600H0z" fill="#333"/></svg>
<div class="t" style="left:31.30px;top:217.40px;letter-spacing:-0.092px;">Structure</div>
<div class="t" style="left:133.40px;top:217.40px;letter-spacing:0.042px;">powerAvgTotal</div>
<div class="t" style="left:226.60px;top:217.40px;letter-spacing:-0.679px;">W</div>
<div class="t" style="left:294.60px;top:217.40px;letter-spacing:-0.490px;">30.000</div>
<div class="t" style="left:361.10px;top:217.40px;letter-spacing:-0.494px;">0.000</div>
<div class="t" style="left:420.00px;top:217.40px;letter-spacing:-0.490px;">30.000</div>
<div class="vsb" style="left:459.4px;top:43.39999999999998px;width:10.200px;height:184.60000000000002px"><svg style="left:2.600px;top:4.500px" width="5" height="3"><path d="M.5 2.800L2.500 .3 4.500 2.800z" fill="#505050"/></svg><div class="th" style="top:11.600000000000023px;height:128px;width:10.200px"></div><svg style="left:2.600px;top:73.10000000000002px" width="5" height="5"><path d="M0 .5h5M0 2.500h5M0 4.500h5" stroke="#666" stroke-width=".6"/></svg><svg style="left:2.600px;top:179.60000000000002px" width="5" height="3"><path d="M.5 .2L2.500 2.700 4.500 .2z" fill="#505050"/></svg></div>
</div>
<div class="panel" id="pGr" style="left:481px;top:497px;width:716.500px;height:236px">
<div class="tabbar" style="height:15.500px;background:#f4f5fb"></div>
<div class="tab-act" style="left:141.5px;width:75px;height:15.500px;background:#fff"></div>
<svg style="left:2px;top:3px" width="9" height="10" viewBox="0 0 9 10"><rect x=".4" y=".4" width="7.600" height="9" fill="#f3f6fb" stroke="#b6c3d6" stroke-width=".7"/><circle cx="3.400" cy="3" r="1.500" fill="#e8a0a0"/><path d="M2 8.600l1.400-2.400 1.400 2.400z" fill="#f0d080"/><path d="M6 1v8" stroke="#c8d2e2" stroke-width=".8"/></svg>
<div class="t dim" style="left:14.80px;top:3.80px;letter-spacing:-0.085px;">Problems</div>
<svg style="left:53px;top:4px" width="9" height="8" viewBox="0 0 9 8"><rect x=".4" y=".4" width="8.200" height="7" fill="#f6f7fa" stroke="#a9afbb" stroke-width=".7"/><path d="M.4 2.400h8.200M3 2.400v5" stroke="#bfc5d0" stroke-width=".6"/><rect x=".8" y=".8" width="7.400" height="1.400" fill="#c6d3e8"/></svg>
<div class="t dim" style="left:64.90px;top:3.80px;letter-spacing:-0.158px;">Properties</div>
<svg style="left:104.5px;top:3.500px" width="10" height="9" viewBox="0 0 10 9"><path d="M.6 8.400L4.600 4.400" stroke="#c8b48a" stroke-width="1.400"/><path d="M3.600 5l3.600-4 2 1.800-3.800 3.800z" fill="#f3e4b8" stroke="#c9b78c" stroke-width=".6"/></svg>
<div class="t dim" style="left:116.70px;top:3.80px;letter-spacing:-0.461px;">Search</div>
<svg style="left:144px;top:2.500px" width="10" height="10"><use href="#i-mode"/></svg>
<div class="t" style="left:156.60px;top:3.80px;letter-spacing:-0.058px;">Mode Graphs</div>
<svg style="left:206px;top:4.500px" width="7.500" height="7.500"><use href="#i-close"/></svg>
<div class="t" style="left:220.50px;top:3.60px;letter-spacing:-0.438px;font-size:8px;font-family:"Liberation Serif",serif;font-style:italic;color:#555;">f(x)</div>
<div class="t dim" style="left:232.70px;top:3.80px;letter-spacing:-0.027px;">Domain Round</div>
<div class="mm" style="left:687px;top:3.500px"></div><div class="mx" style="left:701px;top:3.500px"></div>
<div style="position:absolute;left:0;top:15.500px;width:716.500px;height:22.500px;background:linear-gradient(#fff 0,#fff 25%,#e4ecf6 100%);border-bottom:1px solid #d3ddea"></div>
<svg style="left:4.399999999999977px;top:22px" width="11.500" height="11.500"><use href="#i-mode"/></svg>
<div class="t" style="left:18.30px;top:22.80px;letter-spacing:-0.110px;font-size:10.2px;font-weight:700;color:#1f4e8a;line-height:12px;">Mode Overview Graphs: powerAvgTotal</div>
<div class="t" style="left:105.90px;top:46.60px;letter-spacing:0.392px;font-size:12.6px;font-weight:700;color:#000;line-height:14px;">Parameter Mode Values</div>
<div style="position:absolute;left:43.700000000000045px;top:64.20000000000005px;width:305.79999999999995px;height:127.19999999999993px;background:#c0c0c0;border-top:1px solid #2a2a2a;border-right:1px solid #2a2a2a"></div>
<div style="position:absolute;left:43.700000000000045px;top:166.84px;width:304.79999999999995px;height:.800px;background:repeating-linear-gradient(90deg,#fff 0,#fff 1.300px,transparent 1.300px,transparent 2.500px);opacity:.5"></div>
<div style="position:absolute;left:43.700000000000045px;top:142.68px;width:304.79999999999995px;height:.800px;background:repeating-linear-gradient(90deg,#fff 0,#fff 1.300px,transparent 1.300px,transparent 2.500px);opacity:.5"></div>
<div style="position:absolute;left:43.700000000000045px;top:118.52px;width:304.79999999999995px;height:.800px;background:repeating-linear-gradient(90deg,#fff 0,#fff 1.300px,transparent 1.300px,transparent 2.500px);opacity:.5"></div>
<div style="position:absolute;left:43.700000000000045px;top:94.36px;width:304.79999999999995px;height:.800px;background:repeating-linear-gradient(90deg,#fff 0,#fff 1.300px,transparent 1.300px,transparent 2.500px);opacity:.5"></div>
<div style="position:absolute;left:43.700000000000045px;top:70.20px;width:304.79999999999995px;height:.800px;background:repeating-linear-gradient(90deg,#fff 0,#fff 1.300px,transparent 1.300px,transparent 2.500px);opacity:.5"></div>
<div class="t" style="left:33.32px;top:186.90px;letter-spacing:0.000px;font-size:7.7px;color:#444;">0</div>
<div style="position:absolute;left:40.5px;top:191.00px;width:2.500px;height:.800px;background:#777"></div>
<div class="t" style="left:29.03px;top:162.74px;letter-spacing:0.000px;font-size:7.7px;color:#444;">50</div>
<div style="position:absolute;left:40.5px;top:166.84px;width:2.500px;height:.800px;background:#777"></div>
<div class="t" style="left:24.75px;top:138.58px;letter-spacing:0.000px;font-size:7.7px;color:#444;">100</div>
<div style="position:absolute;left:40.5px;top:142.68px;width:2.500px;height:.800px;background:#777"></div>
<div class="t" style="left:24.75px;top:114.42px;letter-spacing:0.000px;font-size:7.7px;color:#444;">150</div>
<div style="position:absolute;left:40.5px;top:118.52px;width:2.500px;height:.800px;background:#777"></div>
<div class="t" style="left:24.75px;top:90.26px;letter-spacing:0.000px;font-size:7.7px;color:#444;">200</div>
<div style="position:absolute;left:40.5px;top:94.36px;width:2.500px;height:.800px;background:#777"></div>
<div class="t" style="left:24.75px;top:66.10px;letter-spacing:0.000px;font-size:7.7px;color:#444;">250</div>
<div style="position:absolute;left:40.5px;top:70.20px;width:2.500px;height:.800px;background:#777"></div>
<div style="position:absolute;left:42.60000000000002px;top:64.20000000000005px;width:.800px;height:128.19999999999993px;background:#888"></div>
<div style="position:absolute;left:59.0px;top:70.93px;width:70.9px;height:120.47px;background:#ff5555"></div>
<div style="position:absolute;left:65.9px;top:70.93px;width:7.0px;height:120.47px;background:#fff"></div>
<div style="position:absolute;left:116.3px;top:70.93px;width:13.6px;height:120.47px;background:#ff7a7a"></div>
<div style="position:absolute;left:161.1px;top:142.40px;width:71.3px;height:49.00px;background:#5555ff"></div>
<div style="position:absolute;left:168.1px;top:142.40px;width:6.9px;height:49.00px;background:#fff"></div>
<div style="position:absolute;left:218.1px;top:142.40px;width:14.3px;height:49.00px;background:#7a7aff"></div>
<div style="position:absolute;left:263.3px;top:102.90px;width:71.2px;height:88.50px;background:#55ff55"></div>
<div style="position:absolute;left:270.2px;top:102.90px;width:7.0px;height:88.50px;background:#fff"></div>
<div style="position:absolute;left:320.0px;top:102.90px;width:14.5px;height:88.50px;background:#7aff7a"></div>
<div style="position:absolute;left:43.700000000000045px;top:193.20000000000005px;width:305.79999999999995px;height:.800px;background:#777"></div>
<div style="position:absolute;left:197px;top:193.20000000000005px;width:.800px;height:2.500px;background:#777"></div>
<svg style="left:13px;top:103px" width="12" height="46"><text x="0" y="0" transform="translate(9 44.500) rotate(-90)" font-family="Liberation Sans, sans-serif" font-size="7.600" font-weight="700" fill="#333" textLength="42.500" lengthAdjust="spacingAndGlyphs">Power [W]</text></svg>
<div class="t" style="left:183.00px;top:203.80px;letter-spacing:0.546px;font-size:7.6px;font-weight:700;color:#333;">Modes</div>
<div style="position:absolute;left:122.60000000000002px;top:216.39999999999998px;width:116.39999999999998px;height:14.300px;background:#fff;border:1px solid #444"></div>
<div style="position:absolute;left:125.29999999999995px;top:221.60000000000002px;width:4.600px;height:4.600px;background:#ff5555"></div>
<div class="t" style="left:132.30px;top:219.60px;letter-spacing:-0.104px;font-size:7.9px;color:#222;">Default</div>
<div style="position:absolute;left:160.79999999999995px;top:221.60000000000002px;width:4.600px;height:4.600px;background:#5555ff"></div>
<div class="t" style="left:167.70px;top:219.60px;letter-spacing:-0.289px;font-size:7.9px;color:#222;">SafeMode</div>
<div style="position:absolute;left:204.89999999999998px;top:221.60000000000002px;width:4.600px;height:4.600px;background:#55ff55"></div>
<div class="t" style="left:211.90px;top:219.60px;letter-spacing:-0.444px;font-size:7.9px;color:#222;">Science</div>
<div class="t" style="left:414.00px;top:46.00px;letter-spacing:0.319px;font-size:12.6px;font-weight:700;color:#000;line-height:14px;">Subsystem contribution: Default Mode</div>
<div style="position:absolute;left:361.20000000000005px;top:58.299999999999955px;width:347.79999999999995px;height:128.70000000000005px;background:#c0c0c0;border:1px solid #3a3a3a;border-bottom-width:1.500px;border-right-width:1.500px"></div>
<svg style="left:0;top:0" width="716" height="236"><circle cx="537.6" cy="124.6" r="51" fill="#8a8a8a"/><path d="M535.6 122.6L535.60 71.60A51 51 0 0 1 568.67 83.78z" fill="#55ff55" stroke="#999" stroke-width=".4"/><path d="M535.6 122.6L568.67 83.78A51 51 0 0 1 584.65 108.63z" fill="#ffff55" stroke="#999" stroke-width=".4"/><path d="M535.6 122.6L584.65 108.63A51 51 0 0 1 517.18 170.16z" fill="#ff55ff" stroke="#999" stroke-width=".4"/><path d="M535.6 122.6L517.18 170.16A51 51 0 0 1 491.36 147.98z" fill="#55ffff" stroke="#999" stroke-width=".4"/><path d="M535.6 122.6L491.36 147.98A51 51 0 0 1 500.61 85.49z" fill="#ffaaaa" stroke="#999" stroke-width=".4"/><path d="M535.6 122.6L500.61 85.49A51 51 0 0 1 535.60 71.60z" fill="#808080" stroke="#999" stroke-width=".4"/><path d="M477.6 73.0Q504.0 73.0 519.0 80.0" fill="none" stroke="#222" stroke-width=".6"/><rect x="382.0" y="67.7" width="95.6" height="11.1" fill="#ffffb4" stroke="#3a3a3a" stroke-width=".8"/><path d="M594.0 72.5Q564.0 73.0 551.0 78.0" fill="none" stroke="#222" stroke-width=".6"/><rect x="594.0" y="67.0" width="85.0" height="11.2" fill="#ffffb4" stroke="#3a3a3a" stroke-width=".8"/><path d="M595.7 94.0Q584.0 94.0 574.0 97.5" fill="none" stroke="#222" stroke-width=".6"/><rect x="595.7" y="84.0" width="59.8" height="20.2" fill="#ffffb4" stroke="#3a3a3a" stroke-width=".8"/><path d="M474.8 114.5Q482.0 114.5 490.0 116.0" fill="none" stroke="#222" stroke-width=".6"/><rect x="398.3" y="104.9" width="76.5" height="20.1" fill="#ffffb4" stroke="#3a3a3a" stroke-width=".8"/><path d="M475.8 163.7Q494.0 163.5 506.0 157.0" fill="none" stroke="#222" stroke-width=".6"/><rect x="376.8" y="158.0" width="99.0" height="11.3" fill="#ffffb4" stroke="#3a3a3a" stroke-width=".8"/><path d="M594.7 162.8Q577.0 163.0 566.0 156.0" fill="none" stroke="#222" stroke-width=".6"/><rect x="594.7" y="157.0" width="83.7" height="11.5" fill="#ffffb4" stroke="#3a3a3a" stroke-width=".8"/></svg>
<div class="t" style="left:384.70px;top:68.95px;letter-spacing:-0.084px;font-size:8.2px;color:#111;">Structure->powerAvgTotal</div>
<div class="t" style="left:596.70px;top:68.30px;letter-spacing:-0.130px;font-size:8.2px;color:#111;">Power->powerAvgTotal</div>
<div class="t" style="left:598.70px;top:85.70px;letter-spacing:-0.421px;font-size:8.2px;color:#111;">Communication-</div>
<div class="t" style="left:597.10px;top:94.50px;letter-spacing:-0.030px;font-size:8.2px;color:#111;">>powerAvgTotal</div>
<div class="t" style="left:401.30px;top:106.60px;letter-spacing:-0.393px;font-size:8.2px;color:#111;">DataHandlingSystem-</div>
<div class="t" style="left:408.05px;top:115.40px;letter-spacing:-0.030px;font-size:8.2px;color:#111;">>powerAvgTotal</div>
<div class="t" style="left:379.50px;top:159.35px;letter-spacing:-0.164px;font-size:8.2px;color:#111;">Propulsion->powerAvgTotal</div>
<div class="t" style="left:597.40px;top:158.45px;letter-spacing:-0.205px;font-size:8.2px;color:#111;">AOCS->powerAvgTotal</div>
<div style="position:absolute;left:359.4px;top:191px;width:351.6px;height:39.500px;background:#fff;border:1px solid #555"></div>
<div style="position:absolute;left:361.2px;top:195.2px;width:5.600px;height:5.600px;border-radius:50%;background:#55ff55;border:.600px solid #9a9a9a"></div>
<div class="t" style="left:371.60px;top:194.10px;letter-spacing:0.054px;font-size:7.9px;color:#333;">Power->powerAvgTotal</div>
<div style="position:absolute;left:455.7px;top:195.2px;width:5.600px;height:5.600px;border-radius:50%;background:#ffff55;border:.600px solid #9a9a9a"></div>
<div class="t" style="left:465.40px;top:194.10px;letter-spacing:-0.032px;font-size:7.9px;color:#333;">Communication->powerAvgTotal</div>
<div style="position:absolute;left:580.0px;top:195.2px;width:5.600px;height:5.600px;border-radius:50%;background:#ff55ff;border:.600px solid #9a9a9a"></div>
<div class="t" style="left:589.80px;top:194.10px;letter-spacing:-0.037px;font-size:7.9px;color:#333;">AOCS->powerAvgTotal</div>
<div style="position:absolute;left:361.2px;top:208.4px;width:5.600px;height:5.600px;border-radius:50%;background:#55ffff;border:.600px solid #9a9a9a"></div>
<div class="t" style="left:371.60px;top:207.30px;letter-spacing:-0.030px;font-size:7.9px;color:#333;">Propulsion->powerAvgTotal</div>
<div style="position:absolute;left:469.5px;top:208.4px;width:5.600px;height:5.600px;border-radius:50%;background:#ffaaaa;border:.600px solid #9a9a9a"></div>
<div class="t" style="left:479.30px;top:207.30px;letter-spacing:-0.086px;font-size:7.9px;color:#333;">DataHandlingSystem->powerAvgTotal</div>
<div style="position:absolute;left:361.2px;top:220.5px;width:5.600px;height:5.600px;border-radius:50%;background:#808080;border:.600px solid #9a9a9a"></div>
<div class="t" style="left:371.60px;top:219.40px;letter-spacing:0.118px;font-size:7.9px;color:#333;">Structure->powerAvgTotal</div>
</div>
<div style="position:absolute;left:1021.500px;top:738px;width:1px;height:10px;background:repeating-linear-gradient(#a9a89a 0,#a9a89a 1px,transparent 1px,transparent 2.500px)"></div>
</body></html>
